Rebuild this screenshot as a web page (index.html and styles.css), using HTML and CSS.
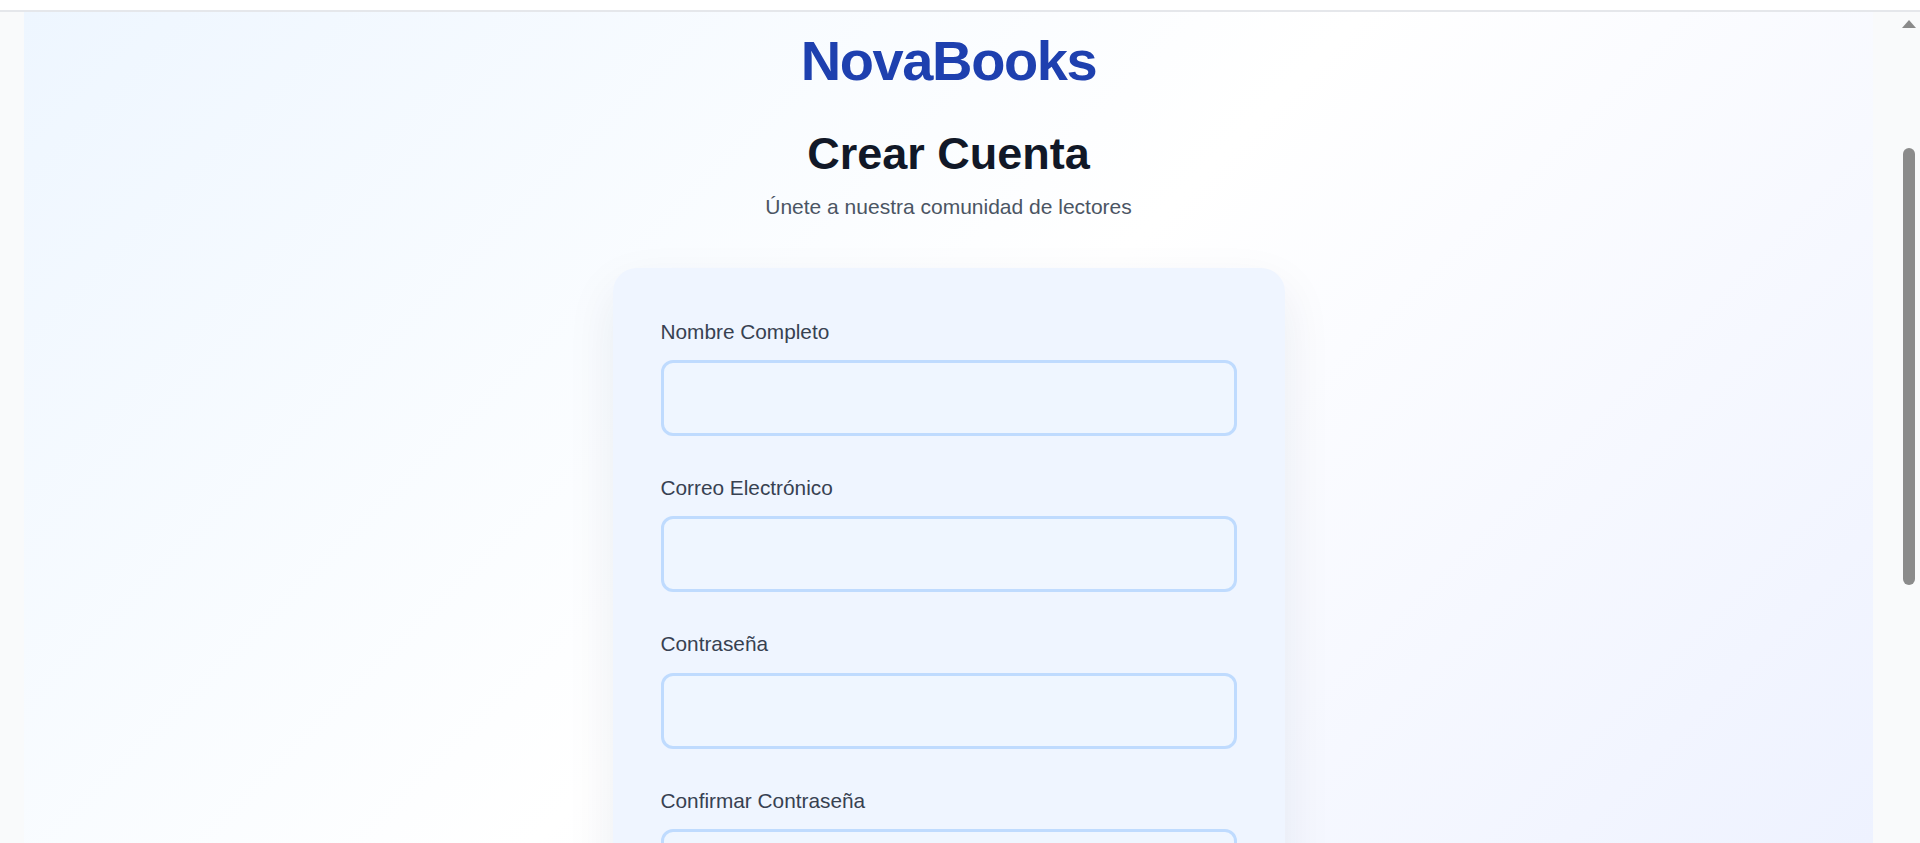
FILE: index.html
```html
<!DOCTYPE html>
<html lang="es">
<head>
<meta charset="utf-8">
<title>NovaBooks - Crear Cuenta</title>
<link rel="stylesheet" href="styles.css">
</head>
<body>
<div class="topbar"></div>
<div class="shell">
  <div class="viewport">
    <main class="page">
      <h1 class="brand">NovaBooks</h1>
      <h2 class="title">Crear Cuenta</h2>
      <p class="subtitle">Únete a nuestra comunidad de lectores</p>
      <form class="card">
        <div class="field">
          <label class="label" for="nombre">Nombre Completo</label>
          <input class="input" id="nombre" type="text">
        </div>
        <div class="field">
          <label class="label" for="correo">Correo Electrónico</label>
          <input class="input" id="correo" type="email">
        </div>
        <div class="field">
          <label class="label" for="pass">Contraseña</label>
          <input class="input" id="pass" type="password">
        </div>
        <div class="field">
          <label class="label" for="pass2">Confirmar Contraseña</label>
          <input class="input" id="pass2" type="password">
        </div>
      </form>
    </main>
  </div>
  <div class="scrollbar">
    <span class="arrow"></span>
    <span class="thumb"></span>
  </div>
</div>
</body>
</html>
```
FILE: styles.css
```css
html, body {
  margin: 0;
  padding: 0;
  height: 843px;
  overflow: hidden;
  background: #ffffff;
  font-family: "Liberation Sans", Arial, sans-serif;
}

.topbar {
  height: 10px;
  background: #ffffff;
  border-bottom: 2px solid #e5e7eb;
}

.shell {
  display: flex;
  height: 831px;
  overflow: hidden;
  background: #f9fafb;
}

.viewport {
  flex: 1;
  padding: 0 27px 0 24px;
  overflow: hidden;
}

.page {
  height: 100%;
  box-sizing: border-box;
  padding-top: 16px;
  display: flex;
  flex-direction: column;
  align-items: center;
  background: linear-gradient(135deg, #eef6ff 0%, #ffffff 50%, #eef2ff 100%);
}

.brand {
  margin: 0;
  font-size: 56px;
  font-weight: 700;
  letter-spacing: -0.025em;
  line-height: normal;
  color: #1e40af;
}

.title {
  margin: 35px 0 0;
  font-size: 45px;
  font-weight: 700;
  line-height: normal;
  color: #111827;
}

.subtitle {
  margin: 15px 0 0;
  font-size: 21px;
  line-height: normal;
  color: #4b5563;
}

.card {
  margin-top: 49px;
  width: 672px;
  box-sizing: border-box;
  padding: 48px 48px 0;
  border-radius: 24px;
  background: #eff5ff;
  box-shadow: 0 20px 50px rgba(30, 41, 80, 0.08);
  flex-shrink: 0;
}

.field {
  margin-bottom: 36px;
}

.label {
  display: block;
  font-size: 20.8px;
  line-height: 1.5;
  color: #374151;
  margin-bottom: 13px;
}

.input {
  display: block;
  width: 100%;
  height: 76px;
  box-sizing: border-box;
  border: 3px solid #bfdbfe;
  border-radius: 12px;
  background: #eff6ff;
  font-family: inherit;
  font-size: 20px;
  padding: 0 16px;
  outline: none;
}

.scrollbar {
  width: 17px;
  margin-right: 3px;
  display: flex;
  flex-direction: column;
  align-items: center;
  padding-top: 8px;
  background: #f9fafb;
}

.arrow {
  width: 0;
  height: 0;
  border-left: 7.5px solid transparent;
  border-right: 7.5px solid transparent;
  border-bottom: 8px solid #8a8a8a;
}

.thumb {
  margin-top: 120px;
  width: 12px;
  height: 437px;
  border-radius: 6px;
  background: #8b8b8b;
}
```
